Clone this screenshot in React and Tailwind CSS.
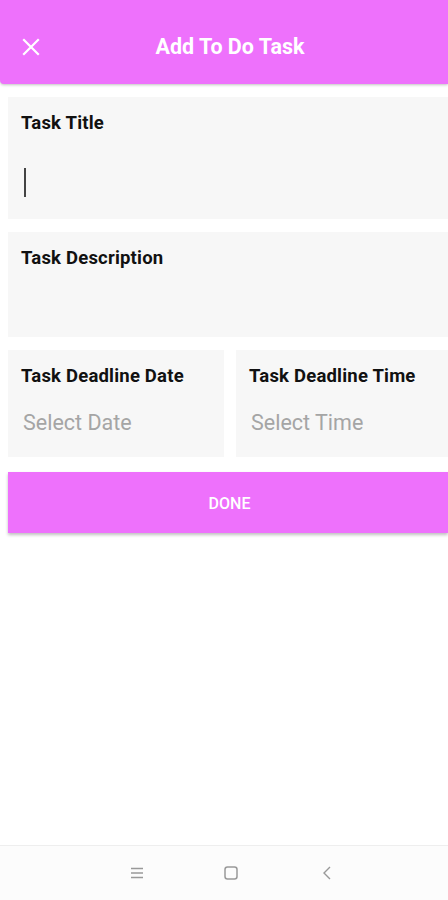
import React from 'react';

const font = { fontFamily: 'Roboto, "Noto Sans", sans-serif' };

const Field = ({ label, children, className = '' }) => (
    <div className={`bg-[#f7f7f7] pl-[13px] ${className}`}>
        <div className="text-[18.5px] font-bold text-[#111] leading-6 tracking-[0.2px]">{label}</div>
        {children}
    </div>
);

export default function App() {
    return (
        <div className="w-[448px] h-[900px] bg-white flex flex-col" style={font}>
            {/* Header */}
            <div className="h-[84px] bg-[#ee71fc] rounded-bl-[4px] shadow-[0_1px_3px_rgba(0,0,0,0.25)] flex items-center relative">
                <svg className="absolute left-[22px] top-[38px]" width="18" height="18" viewBox="0 0 18 18">
                    <path d="M2 2 L16 16 M16 2 L2 16" stroke="white" strokeWidth="2.2" strokeLinecap="square" />
                </svg>
                <div className="w-full text-center pl-[12px] pt-[10px] text-white font-bold text-[21.5px]">Add To Do Task</div>
            </div>

            {/* Form */}
            <div className="pl-[8px] pt-[13px] flex flex-col gap-[13px]">
                <Field label="Task Title" className="h-[122px] pt-[14px]">
                    <div className="mt-[33px] ml-[3px] w-[2px] h-[29px] bg-[#444]" />
                </Field>
                <Field label="Task Description" className="h-[105px] pt-[14px]" />
                <div className="flex gap-[12px] h-[107px]">
                    <Field label="Task Deadline Date" className="w-[216px] pt-[14px]">
                        <div className="mt-[19px] ml-[2px] text-[21.5px] text-[#a5a5a5]">Select Date</div>
                    </Field>
                    <Field label="Task Deadline Time" className="flex-1 pt-[14px]">
                        <div className="mt-[19px] ml-[2px] text-[21.5px] text-[#a5a5a5]">Select Time</div>
                    </Field>
                </div>
                <button className="mt-[2px] h-[61px] bg-[#ee71fc] shadow-[0_2px_3px_rgba(0,0,0,0.25)] text-white text-[16px] font-medium flex items-center justify-center pl-[3px] pt-[3px]">
                    DONE
                </button>
            </div>

            <div className="flex-1" />

            {/* Nav bar */}
            <div className="h-[55px] bg-[#fcfcfc] border-t border-[#eeeeee] flex items-center justify-center pl-[14px]">
                <div className="flex items-center">
                    <svg width="14" height="12" viewBox="0 0 14 12">
                        <path d="M1 1.5 H13 M1 6 H13 M1 10.5 H13" stroke="#999" strokeWidth="1.3" />
                    </svg>
                    <svg className="ml-[80px]" width="14" height="14" viewBox="0 0 14 14">
                        <rect x="1" y="1" width="12" height="12" rx="2.5" fill="none" stroke="#999" strokeWidth="1.5" />
                    </svg>
                    <svg className="ml-[84px]" width="10" height="14" viewBox="0 0 10 14">
                        <path d="M8 1 L2 7 L8 13" fill="none" stroke="#999" strokeWidth="1.4" />
                    </svg>
                </div>
            </div>
        </div>
    );
}
